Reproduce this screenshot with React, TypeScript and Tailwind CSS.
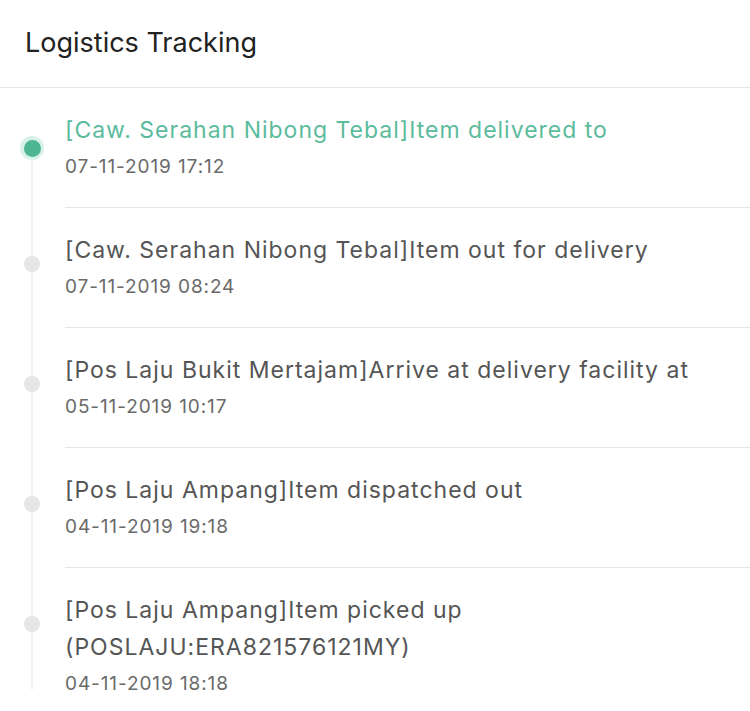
const events = [
  {
    title: '[Caw. Serahan Nibong Tebal]Item delivered to',
    time: '07-11-2019 17:12',
  },
  {
    title: '[Caw. Serahan Nibong Tebal]Item out for delivery',
    time: '07-11-2019 08:24',
  },
  {
    title: '[Pos Laju Bukit Mertajam]Arrive at delivery facility at',
    time: '05-11-2019 10:17',
  },
  {
    title: '[Pos Laju Ampang]Item dispatched out',
    time: '04-11-2019 19:18',
  },
  {
    title: '[Pos Laju Ampang]Item picked up (POSLAJU:ERA821576121MY)',
    time: '04-11-2019 18:18',
  },
];

const App = () => {
  return (
    <div className="min-h-screen bg-white font-['Inter',sans-serif]">
      <header className="h-[88px] border-b border-[#e6e6e6] pl-[25px] pt-[24px]">
        <h1 className="text-[27px] leading-[38px] text-[#222]">Logistics Tracking</h1>
      </header>
      <ul>
        {events.map((e, i) => {
          const first = i === 0;
          const last = i === events.length - 1;
          return (
            <li key={i} className="flex">
              <div className="flex w-[65px] shrink-0 flex-col items-center pr-[1px]">
                <div className={`h-[48px] w-[2px] ${first ? '' : 'bg-[#f3f3f3]'}`} />
                {first ? (
                  <span className="flex h-[24px] w-[24px] items-center justify-center rounded-full bg-[#d8f1e8]">
                    <span className="h-[17px] w-[17px] rounded-full bg-[#4db592]" />
                  </span>
                ) : (
                  <span className="h-[16px] w-[16px] rounded-full bg-[#e6e6e6]" />
                )}
                <div className={`w-[2px] flex-1 bg-[#f3f3f3] ${last ? 'mb-[34px]' : ''}`} />
              </div>
              <div
                className={`flex-1 pt-[24px] pb-[22px] pr-4 ${
                  last ? '' : 'border-b border-[#e6e6e6]'
                }`}
              >
                <p
                  className={`text-[23px] leading-[37px] tracking-[1px] ${
                    first ? 'text-[#5cbb9c]' : 'text-[#555]'
                  }`}
                >
                  {e.title}
                </p>
                <p className="text-[19px] leading-[36px] tracking-[0.9px] text-[#6a6a6a]">
                  {e.time}
                </p>
              </div>
            </li>
          );
        })}
      </ul>
    </div>
  );
};

export default App;
